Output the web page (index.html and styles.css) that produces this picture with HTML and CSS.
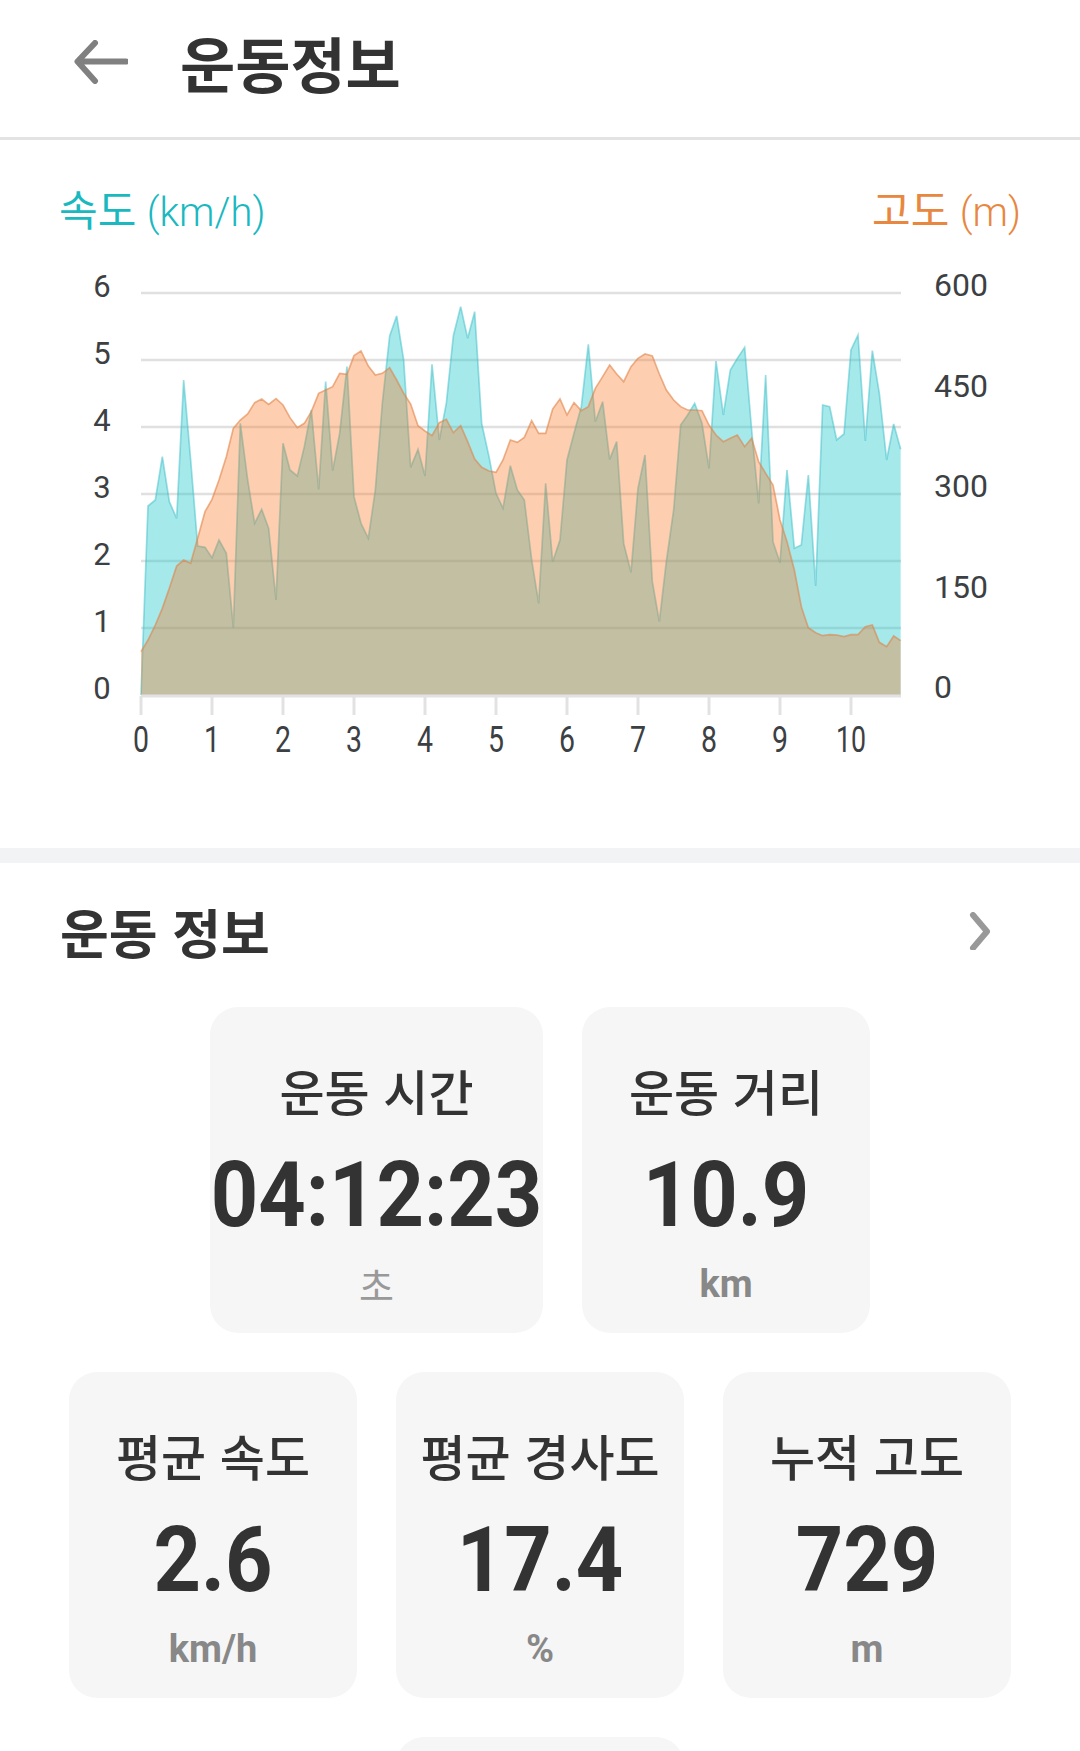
FILE: index.html
```html
<!DOCTYPE html>
<html lang="ko">
<head>
    <meta charset="UTF-8">
    <meta name="viewport" content="width=device-width, initial-scale=1.0">
    <title>운동정보</title>
    <link rel="stylesheet" href="styles.css">
</head>
<body>
    <div class="page">
        <header class="top-bar">
            <svg class="back-icon" width="54" height="44" viewBox="0 0 54 44">
                <path d="M52 21.500H4M21 3 3.500 21.500 21 41"></path>
            </svg>
            <h1>운동정보</h1>
        </header>

        <section class="chart-section">
            <div class="chart-titles">
                <span class="speed-title">속도 <span class="title-unit">(km/h)</span></span>
                <span class="alt-title">고도 <span class="title-unit">(m)</span></span>
            </div>
            <svg class="chart" width="1080" height="589" viewBox="0 260 1080 589">
                <g class="grid">
                    <line x1="141" x2="901" y1="293" y2="293"></line>
                    <line x1="141" x2="901" y1="360" y2="360"></line>
                    <line x1="141" x2="901" y1="427" y2="427"></line>
                    <line x1="141" x2="901" y1="494" y2="494"></line>
                    <line x1="141" x2="901" y1="561" y2="561"></line>
                    <line x1="141" x2="901" y1="628" y2="628"></line>
                </g>
                <g transform="translate(60 260) scale(.33333)">
                    <polygon class="speed-fill" points="243,1305 264,738 286,720 307,590 328,725 350,775 371,360 392,600 413,858 435,862 456,893 477,840 499,880 520,1103 541,490 563,660 584,790 605,748 626,805 648,1020 669,550 690,630 712,648 733,560 754,450 776,688 797,365 818,632 839,520 861,320 882,710 903,790 925,835 946,690 967,430 989,228 1010,168 1031,300 1052,622 1074,568 1095,648 1116,313 1138,540 1159,430 1180,228 1202,140 1223,235 1244,155 1265,490 1287,590 1308,700 1329,745 1351,617 1372,690 1393,720 1415,900 1436,1030 1457,670 1478,905 1500,840 1521,600 1542,520 1564,440 1585,253 1606,485 1628,425 1649,598 1670,545 1691,850 1713,937 1734,685 1755,585 1777,965 1798,1085 1819,905 1841,750 1862,495 1883,465 1904,430 1926,490 1947,625 1968,303 1990,465 2011,330 2032,295 2054,262 2075,510 2096,730 2117,345 2139,845 2160,908 2181,630 2203,865 2224,855 2245,645 2267,978 2288,435 2309,440 2330,540 2352,522 2373,270 2394,225 2416,543 2437,272 2458,400 2480,600 2501,492 2522,568 2522,1305"></polygon>
                    <polyline class="speed-line" points="243,1305 264,738 286,720 307,590 328,725 350,775 371,360 392,600 413,858 435,862 456,893 477,840 499,880 520,1103 541,490 563,660 584,790 605,748 626,805 648,1020 669,550 690,630 712,648 733,560 754,450 776,688 797,365 818,632 839,520 861,320 882,710 903,790 925,835 946,690 967,430 989,228 1010,168 1031,300 1052,622 1074,568 1095,648 1116,313 1138,540 1159,430 1180,228 1202,140 1223,235 1244,155 1265,490 1287,590 1308,700 1329,745 1351,617 1372,690 1393,720 1415,900 1436,1030 1457,670 1478,905 1500,840 1521,600 1542,520 1564,440 1585,253 1606,485 1628,425 1649,598 1670,545 1691,850 1713,937 1734,685 1755,585 1777,965 1798,1085 1819,905 1841,750 1862,495 1883,465 1904,430 1926,490 1947,625 1968,303 1990,465 2011,330 2032,295 2054,262 2075,510 2096,730 2117,345 2139,845 2160,908 2181,630 2203,865 2224,855 2245,645 2267,978 2288,435 2309,440 2330,540 2352,522 2373,270 2394,225 2416,543 2437,272 2458,400 2480,600 2501,492 2522,568"></polyline>
                    <polygon class="alt-fill" points="243,1305 243,1175 264,1140 286,1095 307,1045 328,985 350,918 371,900 392,910 413,835 435,755 456,718 477,660 499,590 520,505 541,480 563,462 584,428 605,417 626,433 648,416 669,435 690,473 712,503 733,490 754,455 776,400 797,390 818,380 839,340 861,343 882,287 903,273 925,318 946,345 967,340 989,323 1010,360 1031,400 1052,432 1074,497 1095,513 1116,527 1138,488 1159,478 1180,518 1202,497 1223,545 1244,597 1265,622 1287,633 1308,637 1329,600 1351,540 1372,547 1393,532 1415,482 1436,520 1457,520 1478,447 1500,417 1521,465 1542,428 1564,452 1585,440 1606,385 1628,350 1649,315 1670,342 1691,365 1713,320 1734,295 1755,282 1777,288 1798,342 1819,390 1841,420 1862,440 1883,450 1904,450 1926,452 1947,495 1968,525 1990,545 2011,535 2032,525 2054,560 2075,535 2096,605 2117,640 2139,675 2160,780 2181,845 2203,930 2224,1040 2245,1103 2267,1118 2288,1127 2309,1124 2330,1125 2352,1130 2373,1124 2394,1124 2416,1100 2437,1095 2458,1147 2480,1160 2501,1128 2522,1142 2522,1305"></polygon>
                    <polyline class="alt-line" points="243,1175 264,1140 286,1095 307,1045 328,985 350,918 371,900 392,910 413,835 435,755 456,718 477,660 499,590 520,505 541,480 563,462 584,428 605,417 626,433 648,416 669,435 690,473 712,503 733,490 754,455 776,400 797,390 818,380 839,340 861,343 882,287 903,273 925,318 946,345 967,340 989,323 1010,360 1031,400 1052,432 1074,497 1095,513 1116,527 1138,488 1159,478 1180,518 1202,497 1223,545 1244,597 1265,622 1287,633 1308,637 1329,600 1351,540 1372,547 1393,532 1415,482 1436,520 1457,520 1478,447 1500,417 1521,465 1542,428 1564,452 1585,440 1606,385 1628,350 1649,315 1670,342 1691,365 1713,320 1734,295 1755,282 1777,288 1798,342 1819,390 1841,420 1862,440 1883,450 1904,450 1926,452 1947,495 1968,525 1990,545 2011,535 2032,525 2054,560 2075,535 2096,605 2117,640 2139,675 2160,780 2181,845 2203,930 2224,1040 2245,1103 2267,1118 2288,1127 2309,1124 2330,1125 2352,1130 2373,1124 2394,1124 2416,1100 2437,1095 2458,1147 2480,1160 2501,1128 2522,1142"></polyline>
                </g>
                <g class="axis">
                    <line x1="141" x2="901" y1="696" y2="696"></line>
                    <line x1="141" x2="141" y1="696" y2="715"></line>
                    <line x1="212" x2="212" y1="696" y2="715"></line>
                    <line x1="283" x2="283" y1="696" y2="715"></line>
                    <line x1="354" x2="354" y1="696" y2="715"></line>
                    <line x1="425" x2="425" y1="696" y2="715"></line>
                    <line x1="496" x2="496" y1="696" y2="715"></line>
                    <line x1="567" x2="567" y1="696" y2="715"></line>
                    <line x1="638" x2="638" y1="696" y2="715"></line>
                    <line x1="709" x2="709" y1="696" y2="715"></line>
                    <line x1="780" x2="780" y1="696" y2="715"></line>
                    <line x1="851" x2="851" y1="696" y2="715"></line>
                </g>
                <g class="left-labels">
                    <text x="102" y="297">6</text>
                    <text x="102" y="364">5</text>
                    <text x="102" y="431">4</text>
                    <text x="102" y="498">3</text>
                    <text x="102" y="565">2</text>
                    <text x="102" y="632">1</text>
                    <text x="102" y="699">0</text>
                </g>
                <g class="right-labels">
                    <text x="934" y="296">600</text>
                    <text x="934" y="397">450</text>
                    <text x="934" y="497">300</text>
                    <text x="934" y="598">150</text>
                    <text x="934" y="698">0</text>
                </g>
                <g class="bottom-labels">
                    <text x="141" y="752" textLength="16" lengthAdjust="spacingAndGlyphs">0</text>
                    <text x="212" y="752" textLength="16" lengthAdjust="spacingAndGlyphs">1</text>
                    <text x="283" y="752" textLength="16" lengthAdjust="spacingAndGlyphs">2</text>
                    <text x="354" y="752" textLength="16" lengthAdjust="spacingAndGlyphs">3</text>
                    <text x="425" y="752" textLength="16" lengthAdjust="spacingAndGlyphs">4</text>
                    <text x="496" y="752" textLength="16" lengthAdjust="spacingAndGlyphs">5</text>
                    <text x="567" y="752" textLength="16" lengthAdjust="spacingAndGlyphs">6</text>
                    <text x="638" y="752" textLength="16" lengthAdjust="spacingAndGlyphs">7</text>
                    <text x="709" y="752" textLength="16" lengthAdjust="spacingAndGlyphs">8</text>
                    <text x="780" y="752" textLength="16" lengthAdjust="spacingAndGlyphs">9</text>
                    <text x="851" y="752" textLength="30" lengthAdjust="spacingAndGlyphs">10</text>
                </g>
            </svg>
        </section>

        <section class="info-section">
            <div class="info-head">
                <h2>운동 정보</h2>
                <svg class="chevron-icon" width="24" height="38" viewBox="0 0 24 38">
                    <path d="M5 3 19 19.500 5 36"></path>
                </svg>
            </div>
            <div class="cards">
                <div class="card card-wide">
                    <div class="card-label">운동 시간</div>
                    <div class="card-value">04:12:23</div>
                    <div class="card-unit card-unit-kr">초</div>
                </div>
                <div class="card">
                    <div class="card-label">운동 거리</div>
                    <div class="card-value">10.9</div>
                    <div class="card-unit">km</div>
                </div>
                <div class="card">
                    <div class="card-label">평균 속도</div>
                    <div class="card-value">2.6</div>
                    <div class="card-unit">km/h</div>
                </div>
                <div class="card">
                    <div class="card-label">평균 경사도</div>
                    <div class="card-value">17.4</div>
                    <div class="card-unit">%</div>
                </div>
                <div class="card">
                    <div class="card-label">누적 고도</div>
                    <div class="card-value">729</div>
                    <div class="card-unit">m</div>
                </div>
                <div class="card"></div>
            </div>
        </section>
    </div>
</body>
</html>
```
FILE: styles.css
```css
html, body {
    margin: 0;
    padding: 0;
    background: #fff;
}
.page {
    width: 1080px;
    height: 1751px;
    overflow: hidden;
    font-family: 'Roboto', 'Noto Sans CJK KR', sans-serif;
    color: #333;
}
.top-bar {
    display: flex;
    align-items: center;
    height: 124px;
    padding: 0 0 13px 74px;
    border-bottom: 3px solid #e3e3e3;
}
.back-icon {
    display: block;
    margin-right: 52px;
}
.back-icon path {
    fill: none;
    stroke: #808080;
    stroke-width: 6;
    stroke-linecap: round;
    stroke-linejoin: round;
}
.top-bar h1 {
    margin: 0;
    font-family: 'Noto Sans CJK KR', sans-serif;
    font-size: 60px;
    font-weight: 700;
    line-height: 1;
    color: #333;
}
.chart-section {
    height: 708px;
    border-bottom: 15px solid #f2f3f5;
}
.chart-titles {
    display: flex;
    justify-content: space-between;
    height: 120px;
    padding: 46px 59px 0 59px;
    box-sizing: border-box;
    font-size: 42px;
    line-height: 52px;
}
.title-unit {
    font-size: 40px;
    font-weight: 300;
}
.speed-title {
    color: #1ab8bf;
}
.alt-title {
    color: #e8873f;
}
.chart {
    display: block;
}
.grid line {
    stroke: #e0e0e0;
    stroke-width: 2.500;
}
.axis line {
    stroke: #e2e2e2;
    stroke-width: 3;
}
.speed-fill {
    fill: rgba(31, 200, 205, 0.4);
}
.speed-line {
    fill: none;
    stroke: rgba(60, 190, 200, 0.5);
    stroke-width: 5;
}
.alt-fill {
    fill: rgba(250, 116, 28, 0.35);
}
.alt-line {
    fill: none;
    stroke: rgba(225, 130, 70, 0.6);
    stroke-width: 5;
}
.left-labels text,
.right-labels text,
.bottom-labels text {
    font-family: 'Roboto', sans-serif;
    fill: #3c4043;
}
.left-labels text {
    font-size: 31px;
    text-anchor: middle;
}
.right-labels text {
    font-size: 32px;
}
.bottom-labels text {
    font-size: 36px;
    text-anchor: middle;
}
.info-head {
    display: flex;
    justify-content: space-between;
    align-items: center;
    height: 136px;
    padding: 0 88px 0 60px;
    box-sizing: border-box;
}
.info-head h2 {
    margin: 0;
    font-family: 'Noto Sans CJK KR', sans-serif;
    font-size: 53px;
    font-weight: 700;
    line-height: 1;
}
.chevron-icon path {
    fill: none;
    stroke: #999;
    stroke-width: 6;
    stroke-linecap: round;
    stroke-linejoin: round;
}
.cards {
    display: flex;
    flex-wrap: wrap;
    justify-content: center;
    gap: 39px;
    padding: 8px 69px 0 69px;
}
.card {
    width: 288px;
    height: 326px;
    box-sizing: border-box;
    padding-top: 52px;
    border-radius: 28px;
    background: #f6f6f6;
    text-align: center;
}
.card-wide {
    width: 333px;
}
.card-label {
    font-family: 'Noto Sans CJK KR', sans-serif;
    font-size: 49px;
    font-weight: 500;
    line-height: 62px;
    color: #333;
}
.card-value {
    display: flex;
    justify-content: center;
    margin-top: 33px;
    font-size: 90px;
    font-weight: 700;
    line-height: 84px;
    white-space: nowrap;
    color: #333;
    transform: scaleX(0.92);
}
.card-unit {
    margin-top: 24px;
    font-size: 38px;
    font-weight: 700;
    line-height: 44px;
    color: #888;
}
.card-unit-kr {
    font-family: 'Noto Sans CJK KR', sans-serif;
    font-size: 38px;
    font-weight: 400;
    color: #999;
}
```
